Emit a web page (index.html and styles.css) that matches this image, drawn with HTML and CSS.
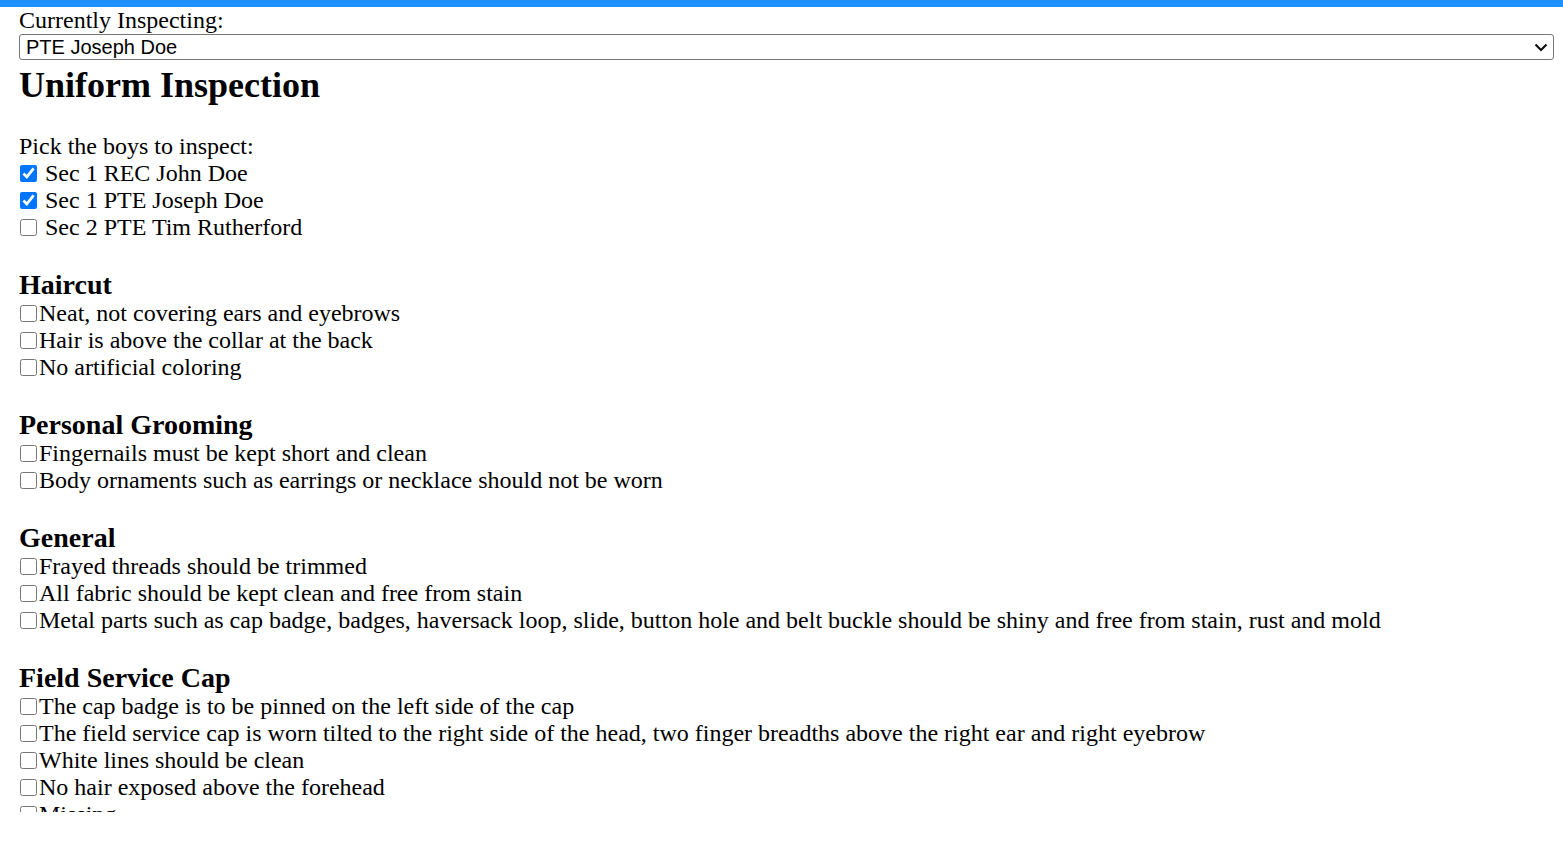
FILE: index.html
```html
<!DOCTYPE html>
<html>
<head>
<meta charset="utf-8">
<link rel="stylesheet" href="styles.css">
</head>
<body>
<div class="topbar"></div>
<main class="page">
  <div class="current-label">Currently Inspecting:</div>
  <div class="select-wrap">
    <select class="current-select">
      <option>PTE Joseph Doe</option>
      <option>Sec 1 REC John Doe</option>
    </select>
    <svg class="chevron" width="14" height="9" viewBox="0 0 14 9"><path d="M1.5 1.5 L7 7 L12.5 1.5" fill="none" stroke="#111" stroke-width="2.2"/></svg>
  </div>
  <h2 class="title">Uniform Inspection</h2>
  <div class="pick-label">Pick the boys to inspect:</div>
  <label class="row"><input type="checkbox" class="cb" checked> Sec 1 REC John Doe</label>
  <label class="row"><input type="checkbox" class="cb" checked> Sec 1 PTE Joseph Doe</label>
  <label class="row"><input type="checkbox" class="cb"> Sec 2 PTE Tim Rutherford</label>

  <h3 class="section">Haircut</h3>
  <label class="row"><input type="checkbox" class="cb">Neat, not covering ears and eyebrows</label>
  <label class="row"><input type="checkbox" class="cb">Hair is above the collar at the back</label>
  <label class="row"><input type="checkbox" class="cb">No artificial coloring</label>

  <h3 class="section">Personal Grooming</h3>
  <label class="row"><input type="checkbox" class="cb">Fingernails must be kept short and clean</label>
  <label class="row"><input type="checkbox" class="cb">Body ornaments such as earrings or necklace should not be worn</label>

  <h3 class="section">General</h3>
  <label class="row"><input type="checkbox" class="cb">Frayed threads should be trimmed</label>
  <label class="row"><input type="checkbox" class="cb">All fabric should be kept clean and free from stain</label>
  <label class="row"><input type="checkbox" class="cb">Metal parts such as cap badge, badges, haversack loop, slide, button hole and belt buckle should be shiny and free from stain, rust and mold</label>

  <h3 class="section">Field Service Cap</h3>
  <label class="row"><input type="checkbox" class="cb">The cap badge is to be pinned on the left side of the cap</label>
  <label class="row"><input type="checkbox" class="cb">The field service cap is worn tilted to the right side of the head, two finger breadths above the right ear and right eyebrow</label>
  <label class="row"><input type="checkbox" class="cb">White lines should be clean</label>
  <label class="row"><input type="checkbox" class="cb">No hair exposed above the forehead</label>
  <label class="row"><input type="checkbox" class="cb">Missing</label>
</main>
</body>
</html>
```
FILE: styles.css
```css
html, body {
  margin: 0;
  padding: 0;
  background: #ffffff;
}
body {
  font-family: "Liberation Serif", "Times New Roman", serif;
  font-size: 24px;
  color: #000;
}
.topbar {
  height: 7px;
  background: #1e90ff;
}
.page {
  height: 805px;
  overflow: hidden;
  padding: 0 9px 0 19px;
}
.current-label {
  line-height: 27px;
}
.select-wrap {
  position: relative;
}
.current-select {
  display: block;
  width: 100%;
  height: 26px;
  margin: 0;
  font-family: "Liberation Sans", Arial, sans-serif;
  font-size: 20px;
  color: #000;
  background: #fff;
  border: 1px solid #767676;
  border-radius: 3px;
  padding: 0 2px 0 6px;
  appearance: none;
  -webkit-appearance: none;
}
.chevron {
  position: absolute;
  right: 6px;
  top: 9px;
  pointer-events: none;
}
.title {
  font-size: 36px;
  font-weight: bold;
  margin: 5px 0 27px;
  line-height: 41px;
}
.pick-label {
  line-height: 27px;
}
.row {
  display: block;
  line-height: 27px;
}
.cb {
  width: 17px;
  height: 17px;
  margin: 0 2px 0 1px;
  vertical-align: -1px;
  accent-color: #0075ff;
}
.section {
  font-size: 28px;
  font-weight: bold;
  line-height: 31px;
  margin: 28px 0 0;
}
```
